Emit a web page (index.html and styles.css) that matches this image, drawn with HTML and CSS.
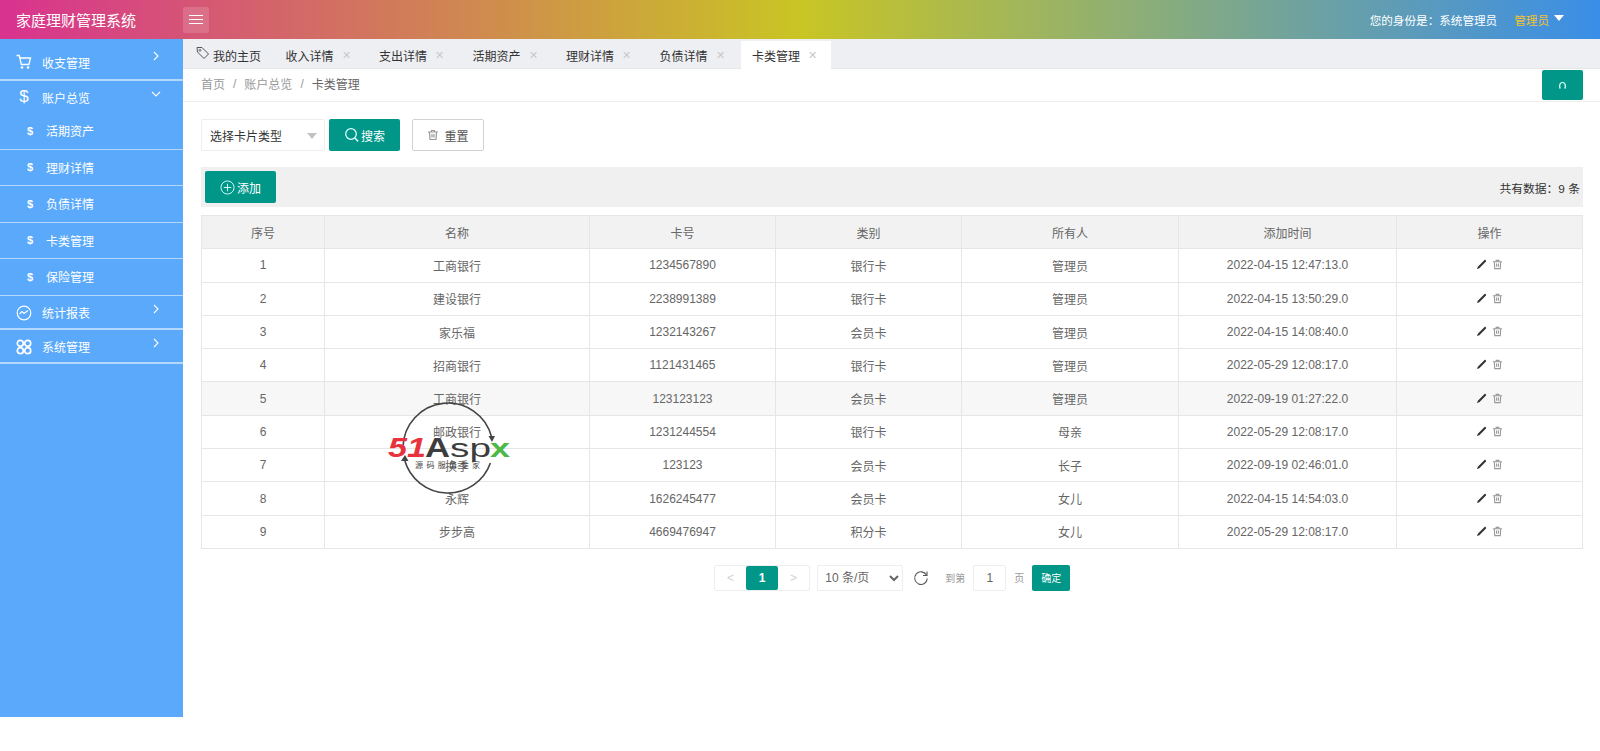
FILE: index.html
```html
<!DOCTYPE html>
<html lang="zh-CN">
<head>
    <meta charset="UTF-8">
    <title>家庭理财管理系统</title>
    <link rel="stylesheet" href="styles.css">
</head>
<body>
    <svg class="icon-defs" width="0" height="0">
        <symbol id="i-edit" viewBox="0 0 12 12"><path d="M1 11l1-2.600L9.300 1.100c.3-.3.7-.3 1 0l.6.6c.3.300.3.700 0 1L3.600 10z" fill="#333"/></symbol>
        <symbol id="i-trash" viewBox="0 0 12 12"><path d="M1 3h10M4.500 3V1.500h3V3M2.500 3l.5 7.500h6l.5-7.500M5 5v3.500M7 5v3.500" fill="none" stroke="currentColor" stroke-width="1.200"/></symbol>
    </svg>

    <header class="topbar">
        <div class="logo">家庭理财管理系统</div>
        <div class="menu-btn"><span></span><span></span><span></span></div>
        <div class="user-info">
            <span class="user-role">您的身份是：系统管理员</span>
            <span class="user-name">管理员</span>
            <i class="user-caret"></i>
        </div>
    </header>

    <div class="layout">
        <aside class="sidebar">
            <div class="nav-item">
                <svg class="nav-icon" viewBox="0 0 16 16"><path d="M.500 1.500h2.800l2 9h7.600l1.600-6.500H4" fill="none" stroke="#fff" stroke-width="1.300"/><circle cx="6" cy="13.500" r="1.300" fill="#fff"/><circle cx="12" cy="13.500" r="1.300" fill="#fff"/></svg>
                <span>收支管理</span>
                <svg class="nav-arrow" viewBox="0 0 10 10"><path d="M3 1l4 4-4 4" fill="none" stroke="#fff" stroke-width="1.100"/></svg>
            </div>
            <div class="nav-item nav-open">
                <span class="nav-dollar">$</span>
                <span>账户总览</span>
                <svg class="nav-arrow" viewBox="0 0 10 10"><path d="M1 3l4 4 4-4" fill="none" stroke="#fff" stroke-width="1.100"/></svg>
            </div>
            <div class="nav-sub"><span class="sub-dollar">$</span><span>活期资产</span></div>
            <div class="nav-sub"><span class="sub-dollar">$</span><span>理财详情</span></div>
            <div class="nav-sub"><span class="sub-dollar">$</span><span>负债详情</span></div>
            <div class="nav-sub"><span class="sub-dollar">$</span><span>卡类管理</span></div>
            <div class="nav-sub"><span class="sub-dollar">$</span><span>保险管理</span></div>
            <div class="nav-item nav-short">
                <svg class="nav-icon" viewBox="0 0 16 16"><circle cx="8" cy="8" r="6.800" fill="none" stroke="#fff" stroke-width="1.200"/><path d="M3.500 9l2.500-2.500 2 2L12 5.500" fill="none" stroke="#fff" stroke-width="1.100"/></svg>
                <span>统计报表</span>
                <svg class="nav-arrow" viewBox="0 0 10 10"><path d="M3 1l4 4-4 4" fill="none" stroke="#fff" stroke-width="1.100"/></svg>
            </div>
            <div class="nav-item nav-short">
                <svg class="nav-icon" viewBox="0 0 16 16"><g fill="none" stroke="#fff" stroke-width="1.700"><circle cx="4.300" cy="4.300" r="3"/><circle cx="11.700" cy="4.300" r="3"/><circle cx="4.300" cy="11.700" r="3"/><circle cx="11.700" cy="11.700" r="3"/></g></svg>
                <span>系统管理</span>
                <svg class="nav-arrow" viewBox="0 0 10 10"><path d="M3 1l4 4-4 4" fill="none" stroke="#fff" stroke-width="1.100"/></svg>
            </div>
        </aside>

        <main class="main">
            <div class="tabs">
                <div class="tab tab-home">
                    <svg class="tab-tag" viewBox="0 0 14 14"><path d="M1 1.500h5l6.500 6.500-4.500 4.500L1.500 6z" fill="none" stroke="#555" stroke-width="1"/><circle cx="4" cy="4.300" r="1" fill="none" stroke="#555" stroke-width=".8"/></svg>
                    我的主页
                </div>
                <div class="tab">收入详情<i class="tab-close">✕</i></div>
                <div class="tab">支出详情<i class="tab-close">✕</i></div>
                <div class="tab">活期资产<i class="tab-close">✕</i></div>
                <div class="tab">理财详情<i class="tab-close">✕</i></div>
                <div class="tab">负债详情<i class="tab-close">✕</i></div>
                <div class="tab tab-active">卡类管理<i class="tab-close">✕</i></div>
            </div>

            <div class="crumbs">
                <span>首页</span><span class="crumb-sep">/</span>
                <span>账户总览</span><span class="crumb-sep">/</span>
                <span class="crumb-now">卡类管理</span>
                <div class="refresh-btn">
                    <svg viewBox="0 0 10 10" width="9" height="9"><path d="M2.500 8.500C1 5.500 2 1.500 5 1.500s4 4 2.500 7" fill="none" stroke="#bff3ea" stroke-width="1.600"/></svg>
                </div>
            </div>

            <div class="content">
                <div class="search-row">
                    <div class="fake-select">选择卡片类型<i class="select-caret"></i></div>
                    <div class="btn btn-search">
                        <svg viewBox="0 0 16 16" width="16" height="16"><circle cx="7" cy="7" r="5.300" fill="none" stroke="#dff" stroke-width="1.300"/><path d="M10.800 11l3.400 3.400" stroke="#dff" stroke-width="1.500"/></svg>
                        搜索
                    </div>
                    <div class="btn btn-reset">
                        <svg viewBox="0 0 12 12" width="12" height="12" class="reset-icon"><use href="#i-trash"/></svg>
                        重置
                    </div>
                </div>

                <div class="toolbar">
                    <div class="btn btn-add">
                        <svg viewBox="0 0 16 16" width="15" height="15"><circle cx="8" cy="8" r="7" fill="none" stroke="#dff" stroke-width="1"/><path d="M8 4v8M4 8h8" stroke="#dff" stroke-width="1"/></svg>
                        添加
                    </div>
                    <div class="total">共有数据：9 条</div>
                </div>

                <table class="data-table">
                    <thead>
                        <tr><th class="col-no">序号</th><th class="col-name">名称</th><th class="col-card">卡号</th><th class="col-type">类别</th><th class="col-owner">所有人</th><th class="col-time">添加时间</th><th>操作</th></tr>
                    </thead>
                    <tbody>
                        <tr><td>1</td><td>工商银行</td><td>1234567890</td><td>银行卡</td><td>管理员</td><td>2022-04-15 12:47:13.0</td><td class="ops"><svg><use href="#i-edit"/></svg><svg class="op-del"><use href="#i-trash"/></svg></td></tr>
                        <tr><td>2</td><td>建设银行</td><td>2238991389</td><td>银行卡</td><td>管理员</td><td>2022-04-15 13:50:29.0</td><td class="ops"><svg><use href="#i-edit"/></svg><svg class="op-del"><use href="#i-trash"/></svg></td></tr>
                        <tr><td>3</td><td>家乐福</td><td>1232143267</td><td>会员卡</td><td>管理员</td><td>2022-04-15 14:08:40.0</td><td class="ops"><svg><use href="#i-edit"/></svg><svg class="op-del"><use href="#i-trash"/></svg></td></tr>
                        <tr><td>4</td><td>招商银行</td><td>1121431465</td><td>银行卡</td><td>管理员</td><td>2022-05-29 12:08:17.0</td><td class="ops"><svg><use href="#i-edit"/></svg><svg class="op-del"><use href="#i-trash"/></svg></td></tr>
                        <tr class="row-hover"><td>5</td><td>工商银行</td><td>123123123</td><td>会员卡</td><td>管理员</td><td>2022-09-19 01:27:22.0</td><td class="ops"><svg><use href="#i-edit"/></svg><svg class="op-del"><use href="#i-trash"/></svg></td></tr>
                        <tr><td>6</td><td>邮政银行</td><td>1231244554</td><td>银行卡</td><td>母亲</td><td>2022-05-29 12:08:17.0</td><td class="ops"><svg><use href="#i-edit"/></svg><svg class="op-del"><use href="#i-trash"/></svg></td></tr>
                        <tr><td>7</td><td>换季</td><td>123123</td><td>会员卡</td><td>长子</td><td>2022-09-19 02:46:01.0</td><td class="ops"><svg><use href="#i-edit"/></svg><svg class="op-del"><use href="#i-trash"/></svg></td></tr>
                        <tr><td>8</td><td>永辉</td><td>1626245477</td><td>会员卡</td><td>女儿</td><td>2022-04-15 14:54:03.0</td><td class="ops"><svg><use href="#i-edit"/></svg><svg class="op-del"><use href="#i-trash"/></svg></td></tr>
                        <tr><td>9</td><td>步步高</td><td>4669476947</td><td>积分卡</td><td>女儿</td><td>2022-05-29 12:08:17.0</td><td class="ops"><svg><use href="#i-edit"/></svg><svg class="op-del"><use href="#i-trash"/></svg></td></tr>
                    </tbody>
                </table>

                <div class="pager">
                    <div class="page-group">
                        <span class="page-btn page-muted">&lt;</span>
                        <span class="page-btn page-current">1</span>
                        <span class="page-btn page-muted">&gt;</span>
                    </div>
                    <select class="page-size"><option>10 条/页</option></select>
                    <svg class="page-reload" viewBox="0 0 16 16"><path d="M13.500 5A6.300 6.300 0 1 0 14.300 8.500" fill="none" stroke="#555" stroke-width="1.100"/><path d="M14 1.500V5.500H10" fill="none" stroke="#555" stroke-width="1.100"/></svg>
                    <span class="page-label">到第</span>
                    <span class="page-input">1</span>
                    <span class="page-label">页</span>
                    <span class="page-ok">确定</span>
                </div>
            </div>
        </main>
    </div>

    <!-- watermark sits over the table -->
    <svg class="watermark" viewBox="0 0 130 100">
        <path d="M18 47A45 45 0 0 1 106.600 37" fill="none" stroke="#444" stroke-width="1.600"/>
        <path d="M105.400 63A45 45 0 0 1 19.600 60" fill="none" stroke="#444" stroke-width="1.600"/>
        <path d="M103.500 36l3.500 6 3-6z" fill="#444"/>
        <path d="M16 61l4-6 3.500 6z" fill="#444"/>
        <text x="3" y="57" class="wm-51" textLength="38" lengthAdjust="spacingAndGlyphs">51</text>
        <text x="40" y="57" class="wm-a" textLength="25" lengthAdjust="spacingAndGlyphs">A</text>
        <text x="65" y="57" class="wm-sp" textLength="41" lengthAdjust="spacingAndGlyphs">sp</text>
        <text x="105" y="57" class="wm-x" textLength="20" lengthAdjust="spacingAndGlyphs">x</text>
        <text x="30" y="68" class="wm-sub" textLength="65">源码服务专家</text>
    </svg>
</body>
</html>
```

FILE: styles.css
```css
* {
    margin: 0;
    padding: 0;
    box-sizing: border-box;
}

body {
    font-family: "Liberation Sans", "Noto Sans CJK SC", sans-serif;
    font-size: 12px;
    color: #333;
    background: #fff;
    position: relative;
    height: 751px;
    overflow: hidden;
}

.icon-defs {
    position: absolute;
}

i {
    font-style: normal;
}

/* top bar */
.topbar {
    height: 39px;
    display: flex;
    align-items: center;
    color: #fff;
    background: linear-gradient(to right, #d9328f 0%, #c9c524 50%, #3a8ee8 100%);
}

.logo {
    width: 183px;
    padding-left: 16px;
    font-size: 15px;
}

.menu-btn {
    width: 26px;
    height: 26px;
    display: flex;
    flex-direction: column;
    justify-content: center;
    align-items: center;
    gap: 3px;
    border-radius: 2px;
    background: rgba(255, 255, 255, 0.15);
}

.menu-btn span {
    width: 14px;
    height: 1px;
    background: #fff;
}

.user-info {
    margin-left: auto;
    padding-right: 36px;
    display: flex;
    align-items: center;
}

.user-role {
    font-size: 11.600px;
}

.user-name {
    margin-left: 17px;
    font-size: 11.600px;
    color: #f1c232;
}

.user-caret {
    margin-left: 5px;
    margin-bottom: 3px;
    border: 5px solid transparent;
    border-top: 6px solid #fff;
    border-bottom: 0;
}

/* layout */
.layout {
    display: flex;
    height: 678px;
}

.sidebar {
    width: 183px;
    flex-shrink: 0;
    background: #5aa9fb;
    color: #fff;
}

.nav-item {
    height: 42px;
    display: flex;
    align-items: center;
    padding: 6px 0 0 16px;
    border-bottom: 2px solid rgba(255, 255, 255, 0.55);
    position: relative;
}

.nav-open {
    height: 32px;
    padding-top: 0;
    border-bottom: 0;
}

.nav-short {
    height: 34px;
    padding-top: 2px;
}

.nav-icon {
    width: 16px;
    height: 16px;
    margin-right: 10px;
}

.nav-dollar {
    width: 16px;
    margin-right: 10px;
    font-size: 17px;
    text-align: center;
}

.nav-arrow {
    position: absolute;
    right: 22px;
    top: 50%;
    width: 10px;
    height: 10px;
    margin-top: -8px;
}

.nav-sub {
    height: 36.500px;
    display: flex;
    align-items: center;
    padding-left: 26px;
    border-bottom: 1.500px solid rgba(255, 255, 255, 0.55);
}

.sub-dollar {
    width: 8px;
    margin-right: 12px;
    font-weight: bold;
    font-size: 11px;
    text-align: center;
}

/* tabs */
.main {
    flex: 1;
    min-width: 0;
}

.tabs {
    height: 30px;
    display: flex;
    align-items: flex-end;
    background: #eeeff2;
    border-bottom: 1px solid #e6e6e6;
}

.tab {
    height: 28px;
    width: 93.500px;
    padding-left: 12px;
    display: flex;
    align-items: center;
    flex-shrink: 0;
    margin-bottom: -1px;
}

.tab-home {
    width: 90.500px;
    padding-left: 13px;
    gap: 3px;
}

.tab-tag {
    width: 14px;
    height: 14px;
    margin-top: -4px;
}

.tab-active {
    width: 90px;
    padding-left: 11px;
    background: #fff;
}

.tab-close {
    margin-left: 8px;
    font-size: 11px;
    color: #c8c8c8;
}

/* breadcrumb */
.crumbs {
    height: 33px;
    display: flex;
    align-items: center;
    padding: 0 17px 3px 18px;
    border-bottom: 1px solid #eee;
    color: #999;
}

.crumb-sep {
    margin: 0 8px;
}

.crumb-now {
    color: #666;
}

.refresh-btn {
    margin-left: auto;
    width: 41px;
    height: 30px;
    margin-bottom: -3px;
    display: flex;
    align-items: center;
    justify-content: center;
    border-radius: 2px;
    background: #009688;
}

/* content */
.content {
    padding: 17px 17px 0 18px;
}

.search-row {
    display: flex;
    align-items: center;
    height: 32px;
}

.fake-select {
    width: 124px;
    height: 32px;
    display: flex;
    align-items: center;
    padding-left: 8px;
    border: 1px solid #eee;
    border-radius: 2px;
    position: relative;
}

.select-caret {
    position: absolute;
    right: 7px;
    top: 13px;
    border: 5px solid transparent;
    border-top: 6px solid #c2c2c2;
    border-bottom: 0;
}

.btn {
    height: 32px;
    display: flex;
    align-items: center;
    justify-content: center;
    border-radius: 2px;
    color: #fff;
    background: #009688;
}

.btn-search {
    width: 71px;
    margin-left: 4px;
    gap: 1px;
}

.btn-reset {
    width: 72px;
    margin-left: 12px;
    gap: 5px;
    color: #555;
    background: #fff;
    border: 1px solid #d2d2d2;
}

.reset-icon {
    color: #999;
}

.toolbar {
    height: 40px;
    margin-top: 16px;
    padding: 0 3px 0 4px;
    display: flex;
    align-items: center;
    justify-content: space-between;
    background: #f0f0f0;
}

.btn-add {
    width: 71px;
    gap: 2px;
}

.total {
    font-size: 11.800px;
}

/* table */
.data-table {
    width: 100%;
    margin-top: 8px;
    border-collapse: collapse;
    table-layout: fixed;
    color: #666;
}

.data-table th,
.data-table td {
    height: 33.300px;
    border: 1px solid #e6e6e6;
    text-align: center;
    font-weight: normal;
}

.data-table th {
    background: #f2f2f2;
}

.col-no { width: 123px; }
.col-name { width: 265px; }
.col-card { width: 186px; }
.col-type { width: 186px; }
.col-owner { width: 217px; }
.col-time { width: 218px; }

.row-hover td {
    background: #f7f7f7;
}

.ops svg {
    width: 11px;
    height: 11px;
    vertical-align: -1px;
}

.op-del {
    margin-left: 5px;
    color: #999;
}

/* pager */
.pager {
    height: 26px;
    margin-top: 16px;
    display: flex;
    align-items: center;
    justify-content: center;
    color: #666;
}

.page-group {
    display: flex;
    height: 26px;
    border: 1px solid #eee;
    border-radius: 2px;
}

.page-btn {
    width: 31.500px;
    display: flex;
    align-items: center;
    justify-content: center;
}

.page-muted {
    color: #d2d2d2;
}

.page-current {
    color: #fff;
    font-weight: bold;
    background: #009688;
    border-radius: 2px;
}

.page-size {
    width: 86px;
    height: 26px;
    margin-left: 7px;
    padding-left: 3px;
    font-family: inherit;
    font-size: 12px;
    color: #666;
    background: #fff;
    border: 1px solid #eee;
    border-radius: 2px;
}

.page-reload {
    width: 16px;
    height: 16px;
    margin-left: 10px;
}

.page-label {
    font-size: 10px;
    color: #999;
}

.page-reload + .page-label {
    margin-left: 16px;
}

.page-input {
    width: 33px;
    height: 26px;
    margin: 0 8px;
    display: flex;
    align-items: center;
    justify-content: center;
    border: 1px solid #eee;
    border-radius: 2px;
}

.page-ok {
    width: 38px;
    height: 26px;
    margin-left: 8px;
    display: flex;
    align-items: center;
    justify-content: center;
    font-size: 10px;
    color: #fff;
    background: #009688;
    border-radius: 2px;
}

/* watermark */
.watermark {
    position: absolute;
    left: 385px;
    top: 400px;
    width: 130px;
    height: 100px;
}

.wm-51 {
    font: italic bold 28px "Liberation Sans", sans-serif;
    fill: #e8333c;
}

.wm-a {
    font: bold 28px "Liberation Sans", sans-serif;
    fill: #3d3d3d;
}

.wm-sp {
    font: 26px "Liberation Sans", sans-serif;
    fill: #3d3d3d;
}

.wm-x {
    font: bold 26px "Liberation Sans", sans-serif;
    fill: #4cb848;
}

.wm-sub {
    font: 8px "Noto Sans CJK SC", sans-serif;
    fill: #444;
}
```
